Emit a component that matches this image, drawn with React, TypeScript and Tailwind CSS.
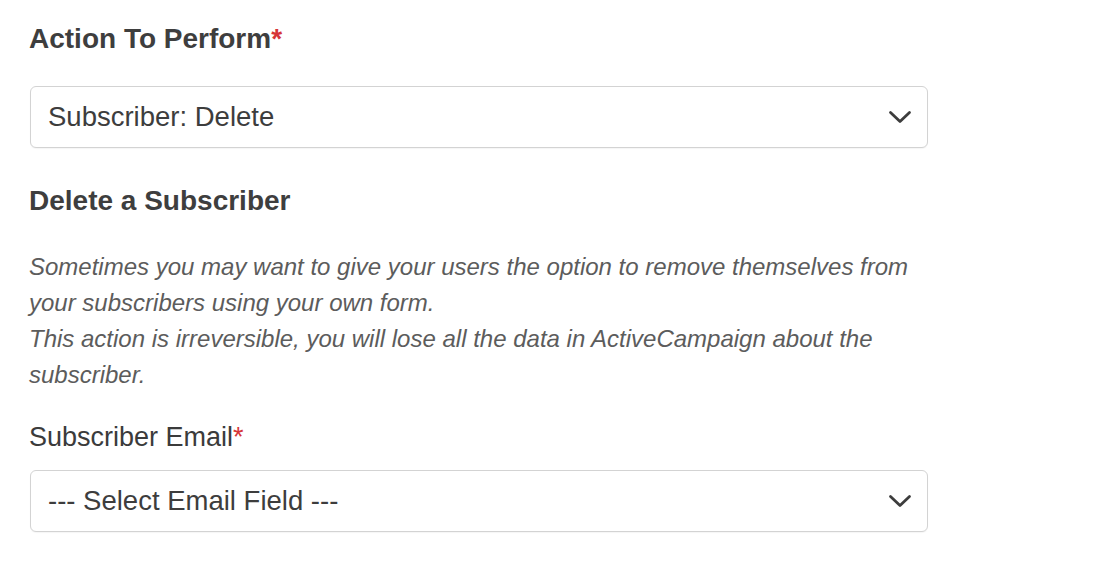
const font = { fontFamily: '"Liberation Sans", Arial, sans-serif' }

function SelectBox({ value }: { value: string }) {
  return (
    <div className="flex h-[62px] w-full items-center justify-between rounded-[6px] border border-[#d3d3d3] bg-white pl-[17px] pr-[15px] shadow-[0_1px_1px_rgba(0,0,0,0.04)]">
      <span className="text-[27.5px] leading-none text-[#3d3d3d]">{value}</span>
      <svg width="24" height="14" viewBox="0 0 24 14" fill="none" className="text-[#3d3d3d]">
        <path d="M2.5 2.5l9.5 9L21.5 2.5" stroke="currentColor" strokeWidth="2.8" strokeLinecap="round" strokeLinejoin="round" />
      </svg>
    </div>
  )
}

export default function App() {
  return (
    <div className="min-h-[564px] bg-white" style={font}>
      <div className="w-[928px] pl-[29px] pt-[23px]">
        <h2 className="text-[28px] font-bold leading-[32px] text-[#3e3e3e]">
          Action To Perform<span className="text-[#d63638]">*</span>
        </h2>
        <div className="mt-[31px] pl-px">
          <SelectBox value="Subscriber: Delete" />
        </div>

        <h3 className="mt-[37px] text-[28px] font-bold leading-[32px] text-[#3e3e3e]">
          Delete a Subscriber
        </h3>
        <p className="mt-[32px] text-[24px] italic leading-[36px] text-[#5c5c5c]">
          Sometimes you may want to give your users the option to remove themselves from your
          subscribers using your own form.
          <br />
          This action is irreversible, you will lose all the data in ActiveCampaign about the
          subscriber.
        </p>

        <label className="mt-[28px] block text-[27px] leading-[32px] text-[#3b3b3b]">
          Subscriber Email<span className="text-[#d63638]">*</span>
        </label>
        <div className="mt-[17px] pl-px">
          <SelectBox value="--- Select Email Field ---" />
        </div>
      </div>
    </div>
  )
}
